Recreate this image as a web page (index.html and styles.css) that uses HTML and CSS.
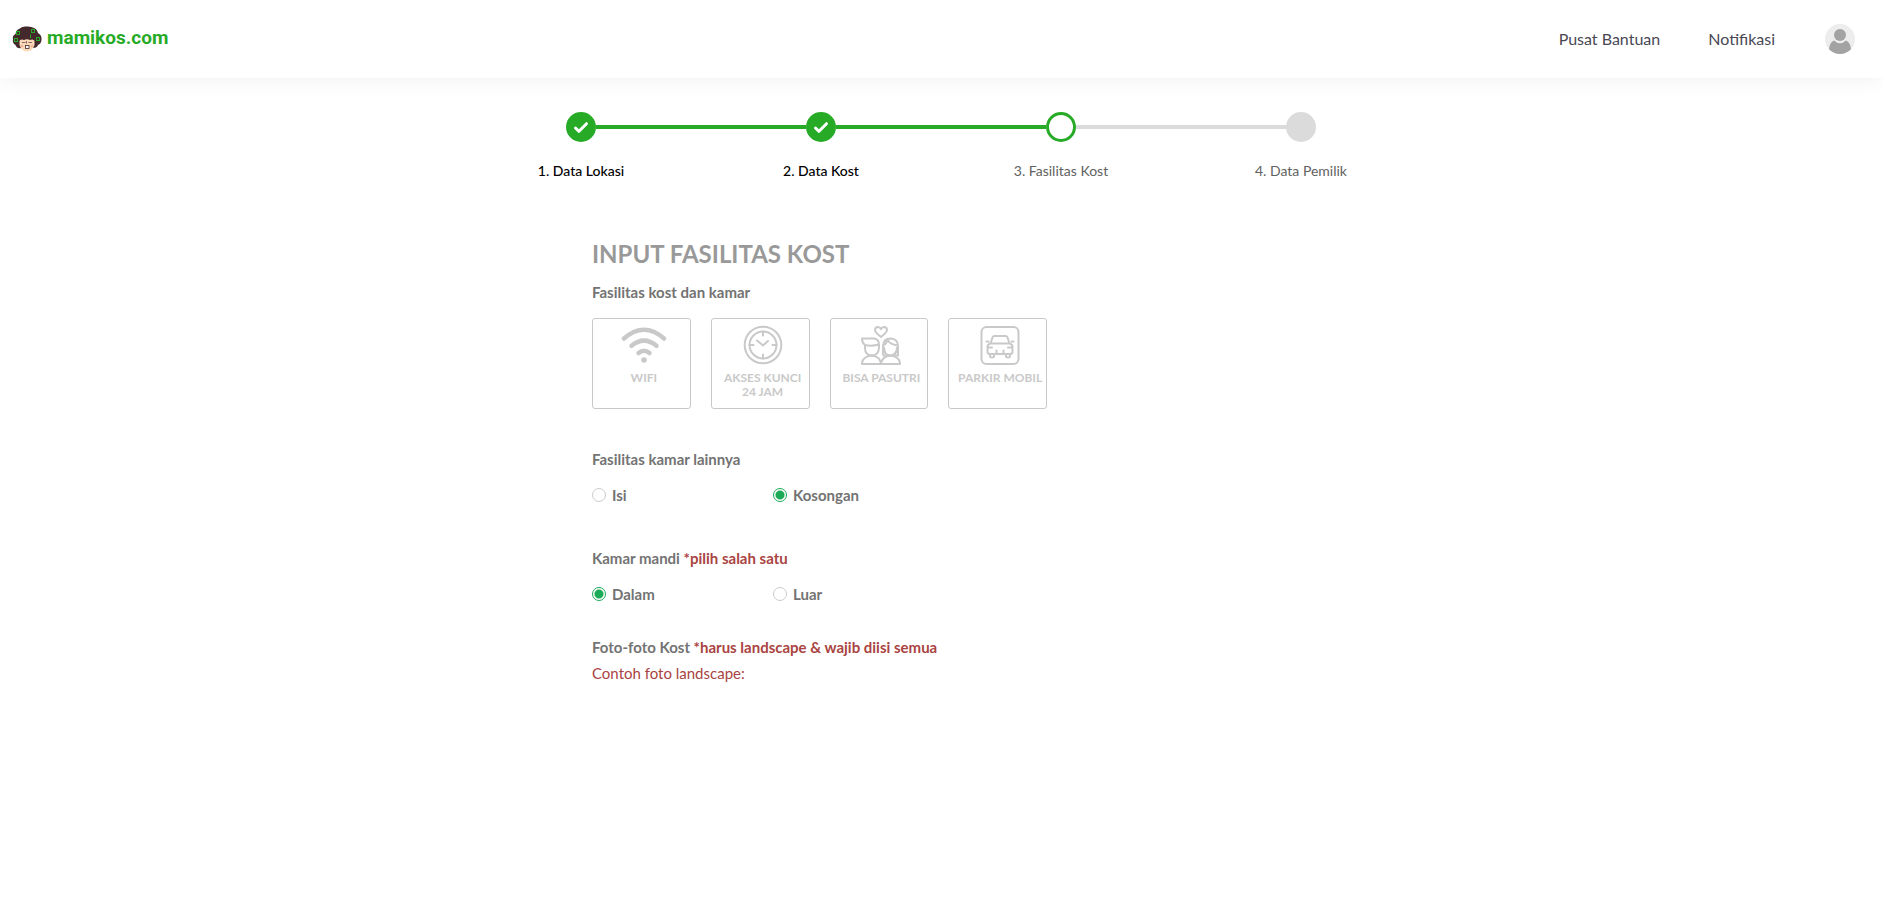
FILE: index.html
```html
<!DOCTYPE html>
<html lang="id">
<head>
<meta charset="utf-8">
<title>Mamikos - Input Fasilitas Kost</title>
<link rel="stylesheet" href="styles.css">
</head>
<body>
<header class="navbar">
  <a class="brand" href="#">
    <svg class="brand-face" viewBox="0 0 30 26" aria-hidden="true">
      <path d="M7 3 Q10 0 14 0.500 Q19 0 22 2 Q25 3 26 7 Q30 9 29.500 14 Q29 18 26 19 Q25 22 21 22 L9 22 Q5 23 3.500 19 Q0 17 1 13 Q0 10 3.500 8 Q4 4 7 3Z" fill="#43282c"/>
      <path d="M7.500 13 H22.500 V19 Q20.500 25.300 15 25.300 Q9.500 25.300 7.500 19Z" fill="#fbd9b8"/>
      <path d="M7 15 Q6 7 15 7 Q24 7 23 15 Q21 12.500 18 14 Q15 12.500 12 14 Q9 12.500 7 15Z" fill="#43282c"/>
      <path d="M10 16.500h3.500M16.500 16.500H20M14.500 15v2.500" stroke="#6d4a48" stroke-width="0.800" fill="none"/>
      <rect x="13.500" y="19.500" width="3.500" height="3" fill="#fff" stroke="#43282c" stroke-width="0.800"/>
      <circle cx="10" cy="20" r="1.300" fill="#f3b29c"/><circle cx="20" cy="20" r="1.300" fill="#f3b29c"/>
      <g fill="none" stroke="#27ab27"><rect x="4.500" y="5.500" width="3" height="3"/><rect x="19.500" y="3.500" width="3" height="3"/><rect x="2.500" y="12.500" width="3" height="3"/><rect x="24.500" y="11.500" width="3" height="3"/><path d="M18.500 8.500v3.500"/></g>
    </svg>
    <span class="brand-name">mamikos.com</span>
  </a>
  <nav class="menu">
    <a class="menu-link" href="#">Pusat Bantuan</a>
    <a class="menu-link" href="#">Notifikasi</a>
    <button class="avatar" type="button" aria-label="Profil">
      <svg viewBox="0 0 30 30" aria-hidden="true"><circle cx="15" cy="15" r="15" fill="#ededed"/><circle cx="15" cy="11" r="6" fill="#a3a3a3"/><path d="M4 25.200 Q4.500 18.500 9 16.500 Q15 22 21 16.500 Q25.500 18.500 26 25.200 A15 15 0 0 1 4 25.200Z" fill="#a3a3a3"/></svg>
    </button>
  </nav>
</header>

<main class="page">
  <ol class="steps">
    <li class="step done"><span class="dot"><svg viewBox="0 0 30 30" aria-hidden="true"><path d="M9.500 16 L13 19.300 L20.500 11.700"/></svg></span><span class="step-label">1. Data Lokasi</span></li>
    <li class="step done"><span class="dot"><svg viewBox="0 0 30 30" aria-hidden="true"><path d="M9.500 16 L13 19.300 L20.500 11.700"/></svg></span><span class="step-label">2. Data Kost</span></li>
    <li class="step current" aria-current="step"><span class="dot"></span><span class="step-label">3. Fasilitas Kost</span></li>
    <li class="step"><span class="dot"></span><span class="step-label">4. Data Pemilik</span></li>
  </ol>

  <form class="form">
    <h1 class="title">INPUT FASILITAS KOST</h1>

    <h2 class="label">Fasilitas kost dan kamar</h2>
    <div class="cards">
      <button class="card" type="button">
        <svg class="icon" viewBox="0 0 48 40" aria-hidden="true"><g fill="none" stroke-width="4.500" stroke-linecap="round"><path d="M4 13.500 Q24 -4 44 13.500"/><path d="M11.500 20.800 Q24 10.500 36.500 20.800"/><path d="M18.500 28 Q24 23.500 29.500 28"/></g><circle cx="24" cy="35" r="2.800" fill="currentColor" stroke="none"/></svg>
        <span>WIFI</span>
      </button>
      <button class="card" type="button">
        <svg class="icon" viewBox="0 0 48 40" aria-hidden="true"><g fill="none" stroke-width="2"><circle cx="24" cy="20" r="18.300"/><circle cx="24" cy="20" r="13.500"/><path d="M24 6.500v4M24 29.500v4M10.500 20h4M33.500 20h4M18 15.500l6 5 5-4.500" stroke-linecap="round"/></g></svg>
        <span>AKSES KUNCI 24 JAM</span>
      </button>
      <button class="card" type="button">
        <svg class="icon" viewBox="0 0 48 40" aria-hidden="true"><g fill="none" stroke-width="2" stroke-linejoin="round"><path d="M24 12 Q17.500 7 18 4.500 Q18.500 2 21 2 Q23 2 24 4.200 Q25 2 27 2 Q29.500 2 30 4.500 Q30.500 7 24 12Z"/><path d="M8 20 Q5 18 5 13.500 H17 Q22 14 22 20 V23 Q21.500 30.500 14.500 30.500 Q8 30 8 23Z M8 20 Q14 21.500 22 19.500"/><path d="M5 39 V38 Q6 31.500 14.500 30.500 Q23.500 31.500 24 39Z"/><path d="M26 30.500 V21 Q26.500 13.500 33.500 13.500 Q41 14 41 21 V30.500 H38 M26 30.500H29 M27 22 Q27 30.500 33.500 30.500 Q40 30 40 22 M26.500 20 Q29.500 19 30.500 15 Q34 20 41 20.500"/><path d="M24 39 Q25 31 33.500 30.500 Q42 31.500 43 38 V39Z"/></g></svg>
        <span>BISA PASUTRI</span>
      </button>
      <button class="card" type="button">
        <svg class="icon" viewBox="0 0 48 40" aria-hidden="true"><g fill="none" stroke-width="2" stroke-linejoin="round" stroke-linecap="round"><rect x="5.500" y="2" width="37" height="37" rx="5"/><path d="M14.500 18.500 L16.500 12.500 Q17 11 18.500 11 H29.500 Q31 11 31.500 12.500 L33.500 18.500 H14.500 Q11.500 19 11.500 22 V26.500 Q11.500 29 14 29 H34 Q36.500 29 36.500 26.500 V22 Q36.500 19 33.500 18.500 M10.500 16.500h2 M37.500 16.500h-2 M12 22.500h4 M36 22.500h-4 M20.500 28.500v-3 M27.500 28.500v-3 M14 29.500v1.500 q0 1.500 2 1.500 q2 0 2-1.500 v-1.500 M30 29.500v1.500 q0 1.500 2 1.500 q2 0 2-1.500 v-1.500"/></g></svg>
        <span>PARKIR MOBIL</span>
      </button>
    </div>

    <fieldset class="group">
      <legend class="label">Fasilitas kamar lainnya</legend>
      <div class="options">
        <label class="option"><input type="radio" name="isi"> Isi</label>
        <label class="option"><input type="radio" name="isi" checked> Kosongan</label>
      </div>
    </fieldset>

    <fieldset class="group">
      <legend class="label">Kamar mandi <span class="note">*pilih salah satu</span></legend>
      <div class="options">
        <label class="option"><input type="radio" name="mandi" checked> Dalam</label>
        <label class="option"><input type="radio" name="mandi"> Luar</label>
      </div>
    </fieldset>

    <section class="photos">
      <h2 class="label">Foto-foto Kost <span class="note">*harus landscape &amp; wajib diisi semua</span></h2>
      <p class="example">Contoh foto landscape:</p>
    </section>
  </form>
</main>
</body>
</html>
```
FILE: styles.css
```css
* { box-sizing: border-box; }

body {
  margin: 0;
  background: #fff;
  color: #737373;
  font: 15px/20px Lato, sans-serif;
}

button { font: inherit; cursor: pointer; }

/* Header */
.navbar {
  display: flex;
  align-items: center;
  justify-content: space-between;
  height: 78px;
  padding: 0 27px 0 12px;
  box-shadow: 0 2px 20px rgba(0, 0, 0, 0.06);
}

.brand {
  display: flex;
  align-items: center;
  gap: 5px;
  color: #27ab27;
  text-decoration: none;
}

.brand-face { width: 30px; height: 26px; }

.brand-name { padding-bottom: 2px; font: bold 19px/24px Roboto, sans-serif; }

.menu { display: flex; align-items: center; gap: 48px; }

.menu-link {
  color: #484854;
  font-size: 16px;
  text-decoration: none;
}

.avatar {
  width: 30px;
  height: 30px;
  margin-left: 2px;
  padding: 0;
  border: 0;
  border-radius: 50%;
  background: none;
}

.avatar svg { display: block; }

/* Progress steps */
.page { padding: 34px 16px 64px; }

.steps {
  display: grid;
  grid-template-columns: repeat(4, 1fr);
  max-width: 960px;
  margin: 0 auto;
  padding: 0;
  list-style: none;
}

.step {
  display: grid;
  grid-template-columns: 1fr 30px 1fr;
  align-items: center;
  row-gap: 19px;
  font-size: 14px;
  color: #616161;
}

.step::before,
.step::after {
  content: "";
  grid-row: 1;
  height: 4px;
  background: #dbdbdb;
}

.step::before { grid-column: 1; }
.step::after { grid-column: 3; }

.done::before,
.done::after,
.current::before { background: #27ab27; }

.step:first-child::before,
.step:last-child::after { visibility: hidden; }

.dot {
  grid-row: 1;
  grid-column: 2;
  height: 30px;
  border-radius: 50%;
  background: #dbdbdb;
}

.done .dot { background: #27ab27; }
.current .dot { border: 3px solid #27ab27; background: #fff; }

.dot svg {
  display: block;
  fill: none;
  stroke: #fff;
  stroke-width: 3;
  stroke-linecap: round;
  stroke-linejoin: round;
}

.step-label { grid-column: 1 / -1; text-align: center; }
.done .step-label { color: #000; font-weight: 500; }

/* Form */
.form { max-width: 698px; margin: 58px auto 0; }

.title {
  margin: 0 0 13px;
  color: #999;
  font-size: 24px;
  line-height: 30px;
}

.label {
  margin: 0;
  padding: 0;
  font-size: 15px;
  font-weight: bold;
}

.note, .example { color: #a94442; }

.cards {
  display: grid;
  grid-template-columns: repeat(4, minmax(0, 1fr));
  gap: 20px;
  max-width: 455px;
  margin: 16px 0 40px;
}

.card {
  display: flex;
  flex-direction: column;
  align-items: center;
  height: 91px;
  padding: 6px 0 0 5px;
  border: 1px solid #c9c9c9;
  border-radius: 3px;
  background: #fff;
  color: #c9c9c9;
  font-size: 12px;
  font-weight: bold;
  line-height: 14px;
}

.card span { width: 88px; margin-top: 6px; }

.icon { flex: none; width: 48px; height: 40px; stroke: currentColor; }

.group { margin: 0 0 43px; padding: 0; border: 0; }
.group + .photos { margin-top: -10px; }

.options { display: flex; padding-top: 16px; }

.option {
  display: flex;
  align-items: center;
  gap: 6px;
  width: 181px;
  font-weight: bold;
}

.option input {
  appearance: none;
  width: 14px;
  height: 14px;
  margin: 0;
  border: 1px solid #ccc;
  border-radius: 50%;
  background: #fff;
}

.option input:checked {
  border-color: #1baa56;
  background: radial-gradient(circle, #1baa56 4px, #fff 5px);
}

.example { margin: 6px 0 0; }
```
